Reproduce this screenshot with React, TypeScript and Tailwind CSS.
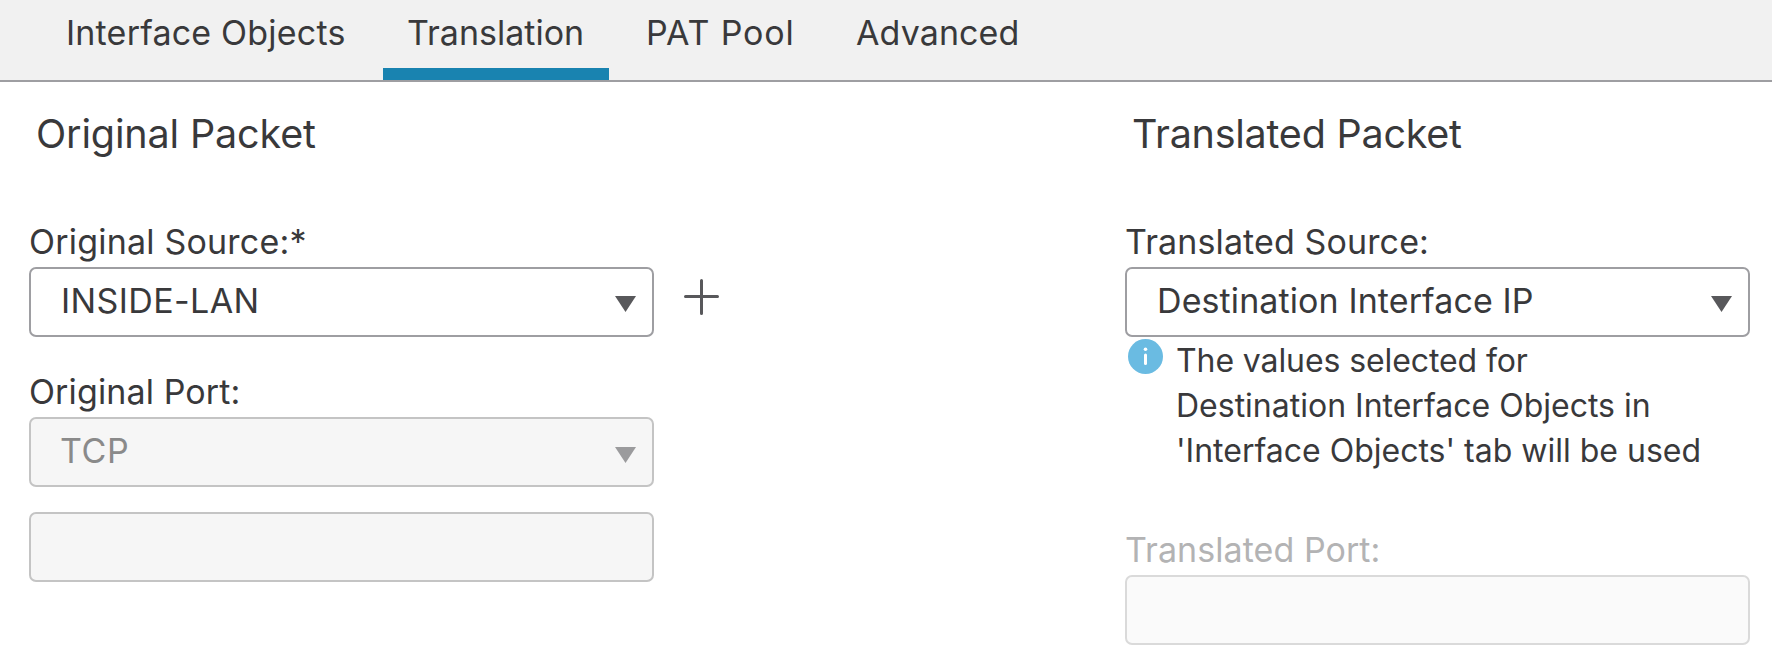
import type { ReactNode } from 'react';
import { clsx } from 'clsx';

function Tab({ children, active, className }: { children: ReactNode; active?: boolean; className?: string }) {
  return (
    <button
      type="button"
      className={clsx(
        'flex h-20 items-start border-b-[12px] text-left leading-[65px] whitespace-nowrap',
        active ? 'border-[#1983b0] pl-6' : 'border-transparent pl-[25px]',
        className,
      )}
    >
      {children}
    </button>
  );
}

function Label({ children, className }: { children: ReactNode; className?: string }) {
  return <div className={clsx('mb-[3px] h-11 leading-[44px] whitespace-nowrap', className)}>{children}</div>;
}

function Caret({ className }: { className?: string }) {
  return (
    <svg viewBox="0 0 21 16" className={clsx('h-4 w-[21px]', className)}>
      <path d="M0 0H21L10.5 16Z" fill="currentColor" />
    </svg>
  );
}

function Field({ children, className }: { children?: ReactNode; className?: string }) {
  return (
    <div
      className={clsx(
        'flex h-[70px] w-[625px] shrink-0 items-start justify-between rounded-[7px] border-2 pr-4 pl-[30px] leading-[64px] whitespace-nowrap',
        className,
      )}
    >
      {children}
    </div>
  );
}

function PlusIcon() {
  return (
    <svg viewBox="0 0 36 36" className="mt-3 ml-[29px] h-9 w-9" fill="none" stroke="#58585b" strokeWidth="3" strokeLinecap="round">
      <path d="M18.5 1.5V34.5M2.5 17.5H34.5" />
    </svg>
  );
}

function InfoIcon() {
  return (
    <svg viewBox="0 0 35 35" className="mt-px ml-[3px] h-[35px] w-[35px] shrink-0">
      <circle cx="17.5" cy="17.5" r="17.5" fill="#6abbe2" />
      <circle cx="17.5" cy="10.3" r="1.8" fill="#fff" />
      <path d="M17.5 16V24.5" stroke="#fff" strokeWidth="3" strokeLinecap="round" />
    </svg>
  );
}

export default function App() {
  return (
    <div className="h-[656px] w-[1772px] overflow-hidden bg-white font-['Inter',sans-serif] text-[34px] text-[#39393b]">
      <nav className="flex h-[82px] gap-3 border-b-2 border-[#9e9ea2] bg-[#f1f1f1] pl-[41px]">
        <Tab className="w-[330px] tracking-[0.2px]">Interface Objects</Tab>
        <Tab active className="w-[226px]">Translation</Tab>
        <Tab className="w-[198px] tracking-[0.85px]">PAT Pool</Tab>
        <Tab className="tracking-[0.1px]">Advanced</Tab>
      </nav>

      <main className="flex pt-7 pl-[29px]">
        <section className="w-[1096px]">
          <h2 className="mb-[62px] h-12 pl-[7px] text-[39.5px] leading-[48px] tracking-[-0.14px]">Original Packet</h2>

          <Label className="tracking-[0.2px]">Original Source:*</Label>
          <div className="mb-[33px] flex">
            <Field className="border-[#9e9ea2]">
              <span className="tracking-[0.4px]">INSIDE-LAN</span>
              <Caret className="mt-[27px] text-[#58585b]" />
            </Field>
            <PlusIcon />
          </div>

          <Label className="tracking-[0.12px]">Original Port:</Label>
          <Field className="mb-[25px] border-[#c4c4c4] bg-[#f6f6f6]">
            <span className="-ml-px tracking-[0.6px] text-[#8a8a8a]">TCP</span>
            <Caret className="mt-7 text-[#9b9b9d]" />
          </Field>
          <Field className="border-[#c4c4c4] bg-[#f6f6f6]" />
        </section>

        <section>
          <h2 className="mb-[62px] h-12 pl-[7px] text-[39.5px] leading-[48px] tracking-[-0.24px]">Translated Packet</h2>

          <Label className="tracking-[0.12px]">Translated Source:</Label>
          <Field className="border-[#9e9ea2]">
            <span className="tracking-[0.1px]">Destination Interface IP</span>
            <Caret className="mt-[27px] text-[#58585b]" />
          </Field>
          <div className="mt-px mb-[55px] flex">
            <InfoIcon />
            <p className="ml-[13px] w-[560px] text-[32px] leading-[45px]">
              <span className="tracking-[-0.1px]">The values selected for</span>
              <br />
              Destination Interface Objects in
              <br />
              'Interface Objects' tab will be used
            </p>
          </div>

          <Label className="tracking-[0.06px] text-[#b3b3b4]">Translated Port:</Label>
          <Field className="border-[#dadada] bg-[#fafafa]" />
        </section>
      </main>
    </div>
  );
}
